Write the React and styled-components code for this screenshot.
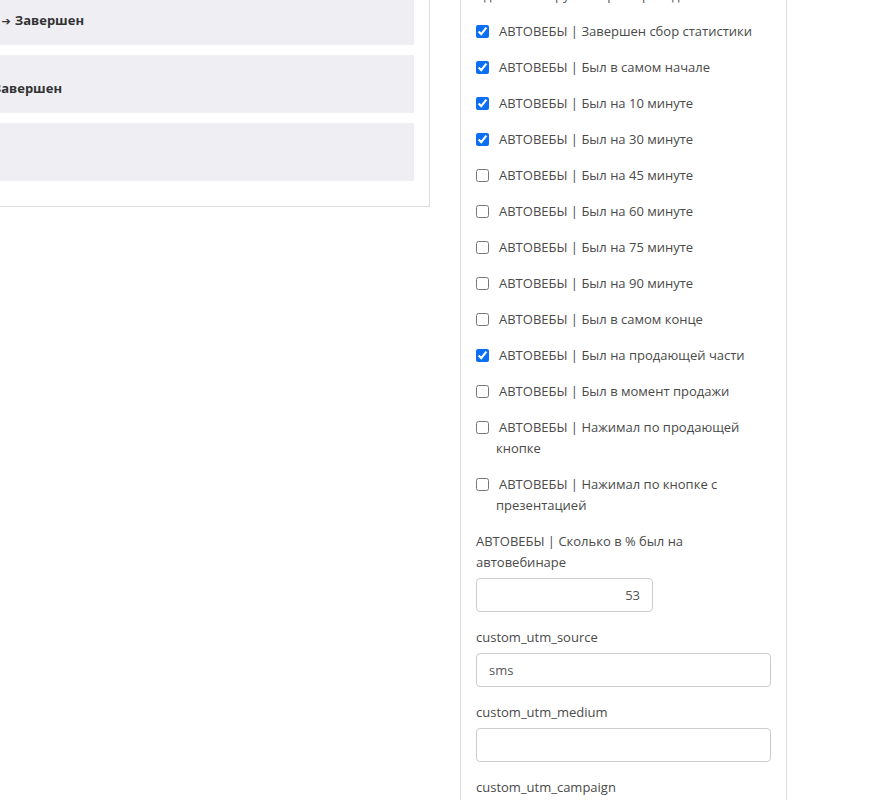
import React from "react";
import styled, { createGlobalStyle } from "styled-components";

const GlobalStyle = createGlobalStyle`
  html, body {
    margin: 0;
    padding: 0;
    background: #fff;
    overflow: hidden;
  }
  body {
    font-family: "Open Sans", "Liberation Sans", Arial, sans-serif;
    color: #4a4a4a;
  }
`;

const Page = styled.div`
  display: flex;
  align-items: flex-start;
  gap: 30px;
  margin-top: -15px;
  height: 815px;
`;

const LeftPanel = styled.div`
  width: 414px;
  padding: 2px 15px 25px 0;
  background: #fff;
  border-right: 1px solid #dcdcdc;
  border-bottom: 1px solid #dcdcdc;
  display: flex;
  flex-direction: column;
  gap: 10px;
`;

const StatusRow = styled.div`
  height: 58px;
  background: #eeeef3;
  display: flex;
  align-items: center;
  padding-top: 8px;
  box-sizing: border-box;
`;

const StatusCaption = styled.div`
  width: ${({ $end }) => $end}px;
  display: flex;
  justify-content: flex-end;
  flex-shrink: 0;
  span {
    white-space: nowrap;
    font-size: 13px;
    font-weight: 700;
    color: #333;
  }
  b {
    font-family: "DejaVu Sans", sans-serif;
    font-size: 11px;
    margin: 0 4px 0 0;
  }
`;

const RightPanel = styled.div`
  width: 295px;
  align-self: stretch;
  padding: 0 15px;
  border-left: 1px solid #dcdcdc;
  border-right: 1px solid #dcdcdc;
  display: flex;
  flex-direction: column;
`;

const TopLabel = styled.div`
  font-size: 13px;
  line-height: 21px;
  color: #555;
  margin-bottom: 15px;
  white-space: nowrap;
`;

const CheckItem = styled.label`
  display: block;
  padding-left: 20px;
  font-size: 13px;
  line-height: 21px;
  color: #4a4a4a;
  margin-bottom: 15px;
  input {
    width: 13px;
    height: 13px;
    margin: 0 10px 0 -20px;
    vertical-align: -2px;
    accent-color: #0b6ff5;
  }
`;

const Group = styled.div`
  display: flex;
  flex-direction: column;
  margin-bottom: 15px;
`;

const FieldLabel = styled.label`
  font-size: 13px;
  line-height: 21px;
  color: #4a4a4a;
  margin-bottom: 5px;
`;

const Field = styled.input`
  box-sizing: border-box;
  width: ${({ $narrow }) => ($narrow ? "177px" : "295px")};
  height: 34px;
  padding: 0 12px;
  border: 1px solid #ccc;
  border-radius: 4px;
  font-family: inherit;
  font-size: 13px;
  color: #555;
  text-align: ${({ $right }) => ($right ? "right" : "left")};
  outline: none;
`;

const checks = [
  ["АВТОВЕБЫ | Завершен сбор статистики", true],
  ["АВТОВЕБЫ | Был в самом начале", true],
  ["АВТОВЕБЫ | Был на 10 минуте", true],
  ["АВТОВЕБЫ | Был на 30 минуте", true],
  ["АВТОВЕБЫ | Был на 45 минуте", false],
  ["АВТОВЕБЫ | Был на 60 минуте", false],
  ["АВТОВЕБЫ | Был на 75 минуте", false],
  ["АВТОВЕБЫ | Был на 90 минуте", false],
  ["АВТОВЕБЫ | Был в самом конце", false],
  ["АВТОВЕБЫ | Был на продающей части", true],
  ["АВТОВЕБЫ | Был в момент продажи", false],
  ["АВТОВЕБЫ | Нажимал по продающей кнопке", false],
  ["АВТОВЕБЫ | Нажимал по кнопке с презентацией", false],
];

export default function App() {
  return (
    <>
      <GlobalStyle />
      <Page>
        <LeftPanel>
          <StatusRow>
            <StatusCaption $end={84}>
              <span>
                Регистрация <b>➔</b>Завершен
              </span>
            </StatusCaption>
          </StatusRow>
          <StatusRow>
            <StatusCaption $end={62}>
              <span>Оплата ➔ Завершен</span>
            </StatusCaption>
          </StatusRow>
          <StatusRow />
        </LeftPanel>
        <RightPanel>
          <TopLabel>Удалить из группы при переходе</TopLabel>
          {checks.map(([text, on]) => (
            <CheckItem key={text}>
              <input type="checkbox" defaultChecked={on} />
              {text}
            </CheckItem>
          ))}
          <Group>
            <FieldLabel>АВТОВЕБЫ | Сколько в % был на автовебинаре</FieldLabel>
            <Field $narrow $right defaultValue="53" />
          </Group>
          <Group>
            <FieldLabel>custom_utm_source</FieldLabel>
            <Field defaultValue="sms" />
          </Group>
          <Group>
            <FieldLabel>custom_utm_medium</FieldLabel>
            <Field defaultValue="" />
          </Group>
          <Group>
            <FieldLabel>custom_utm_campaign</FieldLabel>
            <Field defaultValue="" />
          </Group>
        </RightPanel>
      </Page>
    </>
  );
}
